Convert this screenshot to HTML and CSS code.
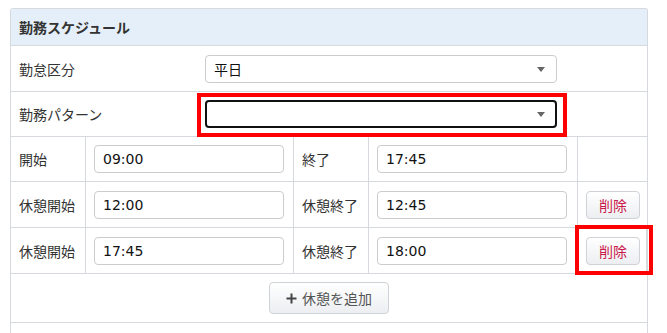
FILE: index.html
```html
<!DOCTYPE html>
<html lang="ja">
<head>
    <meta charset="UTF-8">
    <meta name="viewport" content="width=device-width, initial-scale=1.0">
    <title>勤務スケジュール</title>
    <link rel="stylesheet" href="styles.css">
</head>
<body>
    <div class="panel">
        <div class="panel-head">勤務スケジュール</div>

        <div class="pick-row">
            <div class="label">勤怠区分</div>
            <div class="select">平日<span class="caret"></span></div>
        </div>
        <div class="pick-row">
            <div class="label">勤務パターン</div>
            <div class="select focused"><span class="caret"></span></div>
            <div class="mark mark-pattern"></div>
        </div>

        <div class="time-row">
            <div class="cell label">開始</div>
            <div class="cell"><div class="input">09:00</div></div>
            <div class="cell label">終了</div>
            <div class="cell"><div class="input">17:45</div></div>
            <div class="cell"></div>
        </div>
        <div class="time-row">
            <div class="cell label">休憩開始</div>
            <div class="cell"><div class="input">12:00</div></div>
            <div class="cell label">休憩終了</div>
            <div class="cell"><div class="input">12:45</div></div>
            <div class="cell"><button class="btn del">削除</button></div>
        </div>
        <div class="time-row">
            <div class="cell label">休憩開始</div>
            <div class="cell"><div class="input">17:45</div></div>
            <div class="cell label">休憩終了</div>
            <div class="cell"><div class="input">18:00</div></div>
            <div class="cell"><button class="btn del">削除</button></div>
            <div class="mark mark-del"></div>
        </div>

        <div class="add-row">
            <button class="btn add">
                <svg class="plus" width="11" height="11" viewBox="0 0 11 11">
                    <path d="M5.5 0.5V10.5M0.5 5.5H10.5" stroke="#444" stroke-width="2"/>
                </svg>休憩を追加
            </button>
        </div>
        <div class="rest"></div>
    </div>
</body>
</html>
```

FILE: styles.css
```css
* {
    margin: 0;
    padding: 0;
    box-sizing: border-box;
}

body {
    background-color: #fff;
    font-family: "Noto Sans CJK JP", "Noto Sans", sans-serif;
    font-size: 14px;
    color: #333;
    padding: 8px 19px 0 10px;
}

.panel {
    width: 638px;
    border: 1px solid #d6d9de;
    border-bottom: none;
    border-radius: 3px 3px 0 0;
}

.panel-head {
    height: 37px;
    line-height: 37px;
    padding-left: 8px;
    background-color: #e5eff9;
    border-bottom: 1px solid #d6d9de;
    font-weight: bold;
    border-radius: 3px 3px 0 0;
}

.pick-row {
    position: relative;
    display: grid;
    grid-template-columns: 194px 352px;
    align-items: center;
    height: 46px;
    border-bottom: 1px solid #d6d9de;
}

.pick-row + .pick-row {
    height: 45px;
}

.label {
    padding-left: 8px;
}

.select {
    position: relative;
    height: 28px;
    line-height: 26px;
    padding-left: 8px;
    border: 1px solid #ccc;
    border-radius: 4px;
    color: #111;
}

.select.focused {
    border: 2px solid #111;
}

.caret {
    position: absolute;
    right: 11px;
    top: 11px;
    border-left: 4px solid transparent;
    border-right: 4px solid transparent;
    border-top: 5px solid #666;
}

.focused .caret {
    right: 10px;
    top: 10px;
}

.time-row {
    position: relative;
    display: grid;
    grid-template-columns: 75px 208px 75px 209px 69px;
    height: 45px;
    border-bottom: 1px solid #d6d9de;
}

.time-row + .time-row {
    height: 46px;
}

.cell {
    display: flex;
    align-items: center;
    padding-left: 8px;
    border-right: 1px solid #d6d9de;
}

.cell:last-of-type {
    border-right: none;
}

.input {
    width: 190px;
    height: 28px;
    line-height: 26px;
    padding-left: 8px;
    border: 1px solid #ccc;
    border-radius: 4px;
    color: #111;
    font-family: "DejaVu Sans", "Noto Sans CJK JP", sans-serif;
    font-size: 14px;
}

.btn {
    font-family: inherit;
    font-size: 14px;
    border: 1px solid #cfd2d6;
    border-radius: 4px;
    background: linear-gradient(#fff, #eceef1);
    cursor: pointer;
}

.del {
    width: 54px;
    height: 28px;
    color: #c8194b;
}

.add-row {
    display: flex;
    justify-content: center;
    align-items: center;
    height: 49px;
    border-bottom: 1px solid #d6d9de;
}

.add {
    display: flex;
    align-items: center;
    justify-content: center;
    width: 120px;
    height: 32px;
    color: #555;
}

.plus {
    margin-right: 5px;
}

.rest {
    height: 20px;
}

.mark {
    position: absolute;
    border: 4px solid #f00;
}

.mark-pattern {
    left: 186px;
    top: 1px;
    width: 370px;
    height: 44px;
}

.mark-del {
    left: 564px;
    top: -3px;
    width: 78px;
    height: 50px;
}
```
